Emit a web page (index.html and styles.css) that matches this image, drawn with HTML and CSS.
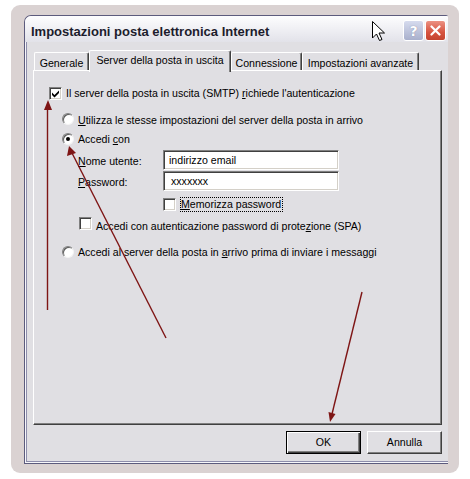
FILE: index.html
```html
<!DOCTYPE html>
<html lang="it">
<head>
  <meta charset="UTF-8">
  <title>Impostazioni posta elettronica Internet</title>
  <link rel="stylesheet" href="styles.css">
</head>
<body>

  <div class="frame">
    <div class="window">
      <div class="titlebar">
        <span class="title">Impostazioni posta elettronica Internet</span>
        <div class="title-buttons">
          <span class="tbtn help">?</span>
          <span class="tbtn close">
            <svg width="11" height="11" viewBox="0 0 11 11"><path d="M1.5 1.5 L9.5 9.5 M9.5 1.5 L1.5 9.5" stroke="#fff" stroke-width="2.2" stroke-linecap="round"/></svg>
          </span>
        </div>
      </div>

      <div class="content">
        <div class="tabs">
          <div class="tab tab-generale">Generale</div>
          <div class="tab tab-server active">Server della posta in uscita</div>
          <div class="tab tab-conn">Connessione</div>
          <div class="tab tab-adv">Impostazioni avanzate</div>
        </div>

        <div class="panel">
          <div class="row row-auth">
            <span class="check">
              <svg width="7" height="8" viewBox="0 0 7 8"><path d="M0 2.5 L2.5 5 L7 0.5 L7 3 L2.5 7.5 L0 5 Z" fill="#000"/></svg>
            </span>
            <span class="label">Il server della posta in uscita (SMTP) <u>r</u>ichiede l'autenticazione</span>
          </div>

          <div class="row row-same">
            <span class="radio"></span>
            <span class="label"><u>U</u>tilizza le stesse impostazioni del server della posta in arrivo</span>
          </div>

          <div class="row row-login">
            <span class="radio checked"></span>
            <span class="label">Accedi <u>c</u>on</span>
          </div>

          <div class="row field-row row-user">
            <span class="field-label"><u>N</u>ome utente:</span>
            <span class="field">indirizzo email</span>
          </div>

          <div class="row field-row row-pass">
            <span class="field-label"><u>P</u>assword:</span>
            <span class="field">xxxxxxx</span>
          </div>

          <div class="row row-remember">
            <span class="check"></span>
            <span class="label focus"><u>M</u>emorizza password</span>
          </div>

          <div class="row row-spa">
            <span class="check"></span>
            <span class="label">Accedi con autenticazione password di prote<u>z</u>ione (SPA)</span>
          </div>

          <div class="row row-before">
            <span class="radio"></span>
            <span class="label">Accedi al server della posta in <u>a</u>rrivo prima di inviare i messaggi</span>
          </div>
        </div>

        <div class="buttons">
          <div class="btn default">OK</div>
          <div class="btn">Annulla</div>
        </div>
      </div>
    </div>
  </div>

  <!-- red annotation arrows and mouse pointer drawn over the dialog -->
  <svg class="overlay" width="470" height="479" viewBox="0 0 470 479">
    <g stroke="#7e1515" stroke-width="1.4" fill="none">
      <line x1="47.5" y1="310" x2="47.5" y2="107"/>
      <line x1="166" y1="338" x2="72" y2="153"/>
      <line x1="362" y1="292" x2="332" y2="414"/>
    </g>
    <g fill="#7e1515">
      <polygon points="48,100 44,110 52,110"/>
      <polygon points="69,146 67,156 76,153"/>
      <polygon points="330,422 328.5,412 335.5,414"/>
    </g>
    <path d="M372.5 21.5 L372.5 38 L376.5 34 L379.5 40.5 L382 39.5 L379 33 L384.5 33 Z" fill="#fff" stroke="#000" stroke-width="1" stroke-linejoin="miter"/>
  </svg>

</body>
</html>
```

FILE: styles.css
```css
body {
  margin: 0;
  background: #fff;
  font-family: "Liberation Sans", Arial, sans-serif;
  font-size: 10.6px;
  color: #000;
}

.frame {
  width: 448px;
  height: 468px;
  margin: 5px 0 0 11px;
  padding: 10px 0 0 13px;
  box-sizing: border-box;
  background: #dad2d2;
  border-radius: 9px;
}

.window {
  width: 424px;
  height: 449px;
  box-sizing: border-box;
  border: 1px solid #5c5b7d;
  border-right: 0;
  border-radius: 7px 2px 0 0;
  background: #e0dfe3;
  box-shadow: inset 1px -1px 0 #f7f7fa, inset 2px -2px 0 #8e8dab;
  display: flex;
  flex-direction: column;
}

.titlebar {
  height: 26px;
  flex: none;
  display: flex;
  justify-content: space-between;
  align-items: flex-start;
  padding: 0 2px 0 6px;
  background: linear-gradient(#fdfdfe, #f1f1f5 45%, #e2e2e9);
  border-radius: 6px 1px 0 0;
}

.title {
  margin-top: 8px;
  font-size: 13px;
  line-height: 15px;
  font-weight: bold;
  color: #1c1c2c;
}

.title-buttons {
  display: flex;
  gap: 1px;
  margin-top: 4px;
}

.tbtn {
  width: 21px;
  height: 21px;
  box-sizing: border-box;
  border: 1px solid #fff;
  border-radius: 3px;
  display: flex;
  align-items: center;
  justify-content: center;
}

.help {
  background: linear-gradient(#d6dbee, #a9b0cc);
  color: #fff;
  font-family: "DejaVu Sans", sans-serif;
  font-weight: bold;
  font-size: 14px;
  text-shadow: 0 0 1px #6d7598;
}

.close {
  background: linear-gradient(#ec9283, #d6533f 60%, #c4432f);
}

.content {
  padding: 8px 0 0 8px;
}

.tabs {
  display: flex;
  align-items: flex-end;
  height: 20px;
  margin-left: 1px;
}

.tab {
  height: 18px;
  box-sizing: border-box;
  padding-top: 3px;
  line-height: 14px;
  text-align: center;
  white-space: nowrap;
  background: #e0dfe3;
  border-top: 1px solid #fff;
  border-left: 1px solid #fff;
  border-right: 1px solid #404040;
  border-radius: 2px 2px 0 0;
  box-shadow: inset -1px 0 0 #808080;
}

.tab-generale { width: 55px; }
.tab-server { width: 142px; }
.tab-conn { width: 71px; }
.tab-adv { width: 117px; }

.tab.active {
  height: 22px;
  padding-top: 2px;
  margin-bottom: -2px;
  position: relative;
  z-index: 1;
}

.panel {
  width: 409px;
  height: 355px;
  box-sizing: border-box;
  padding-top: 14px;
  border-top: 1px solid #fff;
  border-left: 1px solid #fff;
  border-right: 1px solid #404040;
  border-bottom: 1px solid #404040;
  box-shadow: inset -1px -1px 0 #808080;
  background: #e0dfe3;
}

.row {
  display: flex;
  align-items: flex-start;
  height: 16px;
  line-height: 16px;
  white-space: nowrap;
}

.row-auth { margin-left: 15px; }
.row-same { margin: 11px 0 0 28px; }
.row-login { margin: 3px 0 0 28px; }
.row-user { margin: 3px 0 0 44px; }
.row-pass { margin: 1px 0 0 44px; }
.row-remember { margin: 6px 0 0 129px; }
.row-spa { margin: 4px 0 0 45px; }
.row-before { margin: 11px 0 0 28px; }

.check {
  width: 13px;
  height: 13px;
  box-sizing: border-box;
  flex: none;
  margin-top: 2px;
  background: #fff;
  border-top: 1px solid #808080;
  border-left: 1px solid #808080;
  border-right: 1px solid #fff;
  border-bottom: 1px solid #fff;
  box-shadow: inset 1px 1px 0 #404040, inset -1px -1px 0 #d4d0c8;
  display: flex;
  align-items: center;
  justify-content: center;
}

.check + .label {
  margin-left: 4px;
}

.radio {
  width: 12px;
  height: 12px;
  box-sizing: border-box;
  flex: none;
  margin-top: 1px;
  border-radius: 50%;
  background: #fff;
  border: 1px solid;
  border-color: #808080 #f4f4f4 #f4f4f4 #808080;
  box-shadow: inset 1px 1px 0 #5a5a5a;
  display: flex;
  align-items: center;
  justify-content: center;
}

.radio.checked::after {
  content: "";
  width: 4px;
  height: 4px;
  border-radius: 50%;
  background: #000;
}

.row-login .radio,
.row-before .radio {
  margin-top: 2px;
}

.radio + .label {
  margin-left: 4px;
}

.row-remember .check { margin-top: 1px; }
.row-spa .check { margin-top: 0; }
.row-spa .label { padding-top: 1px; }

.focus {
  border: 1px dotted #000;
  line-height: 13px;
  padding: 0 1px 0 0;
  margin-left: 4px;
}

.field-row {
  height: 20px;
}

.field-label {
  width: 85px;
  padding-top: 3px;
}

.field {
  width: 176px;
  height: 20px;
  box-sizing: border-box;
  padding: 1px 0 0 5px;
  line-height: 16px;
  background: #fff;
  border-top: 1px solid #808080;
  border-left: 1px solid #808080;
  border-right: 1px solid #fff;
  border-bottom: 1px solid #fff;
  box-shadow: inset 1px 1px 0 #404040, inset -1px -1px 0 #d4d0c8;
}

.row-pass .field {
  padding-left: 7px;
}

.buttons {
  width: 409px;
  margin-top: 6px;
  display: flex;
  justify-content: flex-end;
  gap: 6px;
}

.btn {
  width: 75px;
  height: 23px;
  box-sizing: border-box;
  line-height: 19px;
  text-align: center;
  background: #e0dfe3;
  border-top: 1px solid #fff;
  border-left: 1px solid #fff;
  border-right: 1px solid #404040;
  border-bottom: 1px solid #404040;
  box-shadow: inset -1px -1px 0 #808080;
  padding-top: 1px;
}

.btn.default {
  border: 1px solid #000;
  box-shadow: inset 1px 1px 0 #fff, inset -1px -1px 0 #404040, inset -2px -2px 0 #808080;
}

.overlay {
  position: absolute;
  top: 0;
  left: 0;
  pointer-events: none;
}
```
